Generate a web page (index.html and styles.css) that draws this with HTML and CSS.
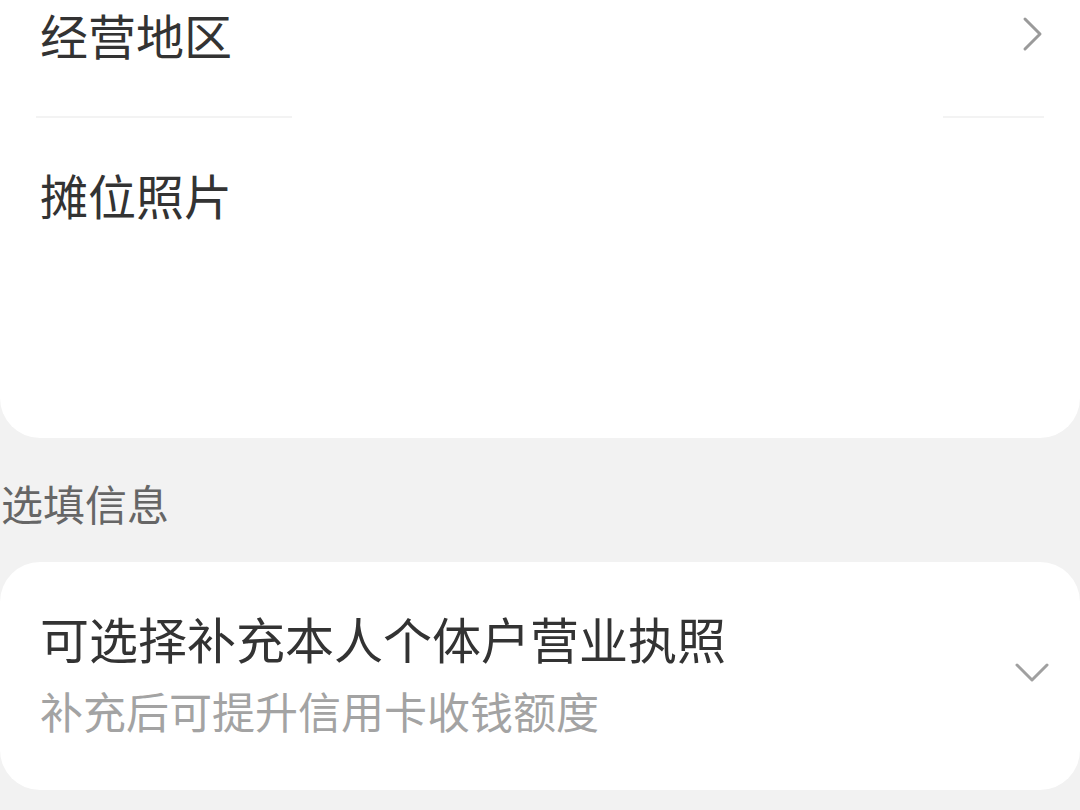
FILE: index.html
```html
<!DOCTYPE html>
<html>
<head>
    <title>商户信息</title>
    <link rel="stylesheet" href="styles.css">
</head>
<body>
<div class="page">
    <div class="card card-top">
        <div class="row">
            <span class="row-title">经营地区</span>
            <svg class="arrow-right" width="22" height="36" viewBox="0 0 22 36">
                <path d="M3 3 L18 18 L3 33" fill="none" stroke="#9a9a9a" stroke-width="3" stroke-linecap="round" stroke-linejoin="round"/>
            </svg>
        </div>
        <div class="divider">
            <span class="divider-line left"></span>
            <span class="divider-line right"></span>
        </div>
        <div class="row photo-row">
            <span class="row-title">摊位照片</span>
        </div>
    </div>

    <div class="section-label">选填信息</div>

    <div class="card card-optional">
        <div class="optional-text">
            <div class="optional-title">可选择补充本人个体户营业执照</div>
            <div class="optional-sub">补充后可提升信用卡收钱额度</div>
        </div>
        <svg class="arrow-down" width="36" height="22" viewBox="0 0 36 22">
            <path d="M3 4 L18 19 L33 4" fill="none" stroke="#a0a0a0" stroke-width="3" stroke-linecap="round" stroke-linejoin="round"/>
        </svg>
    </div>
</div>
</body>
</html>
```

FILE: styles.css
```css
body {
    margin: 0;
    background-color: #f2f2f2;
    font-family: "Noto Sans CJK SC", "Noto Sans", sans-serif;
    color: #333;
}
.page {
    width: 1080px;
    height: 810px;
    overflow: hidden;
}
.card {
    background: white;
}
.card-top {
    height: 438px;
    border-radius: 0 0 40px 40px;
    padding: 0 36px 0 40px;
    box-sizing: border-box;
}
.row {
    display: flex;
    justify-content: space-between;
    align-items: center;
    height: 68px;
}
.row-title {
    font-size: 48px;
    line-height: 68px;
}
.divider {
    display: flex;
    justify-content: space-between;
    margin: 48px 0 0 -4px;
}
.divider-line {
    height: 2px;
    background-color: #f3f3f3;
}
.divider-line.left {
    width: 256px;
}
.divider-line.right {
    width: 101px;
}
.photo-row {
    margin-top: 42px;
}
.section-label {
    font-size: 42px;
    line-height: 60px;
    color: #666;
    padding: 35px 0 0 1px;
    height: 124px;
    box-sizing: border-box;
}
.card-optional {
    height: 228px;
    border-radius: 40px;
    display: flex;
    align-items: flex-start;
    justify-content: space-between;
    padding: 41px 30px 0 40px;
    box-sizing: border-box;
}
.optional-title {
    font-size: 49px;
    line-height: 70px;
    color: #333;
}
.optional-sub {
    font-size: 43px;
    line-height: 60px;
    color: #a3a3a3;
    margin-top: 7px;
}
.arrow-down {
    margin-top: 58px;
}
```
